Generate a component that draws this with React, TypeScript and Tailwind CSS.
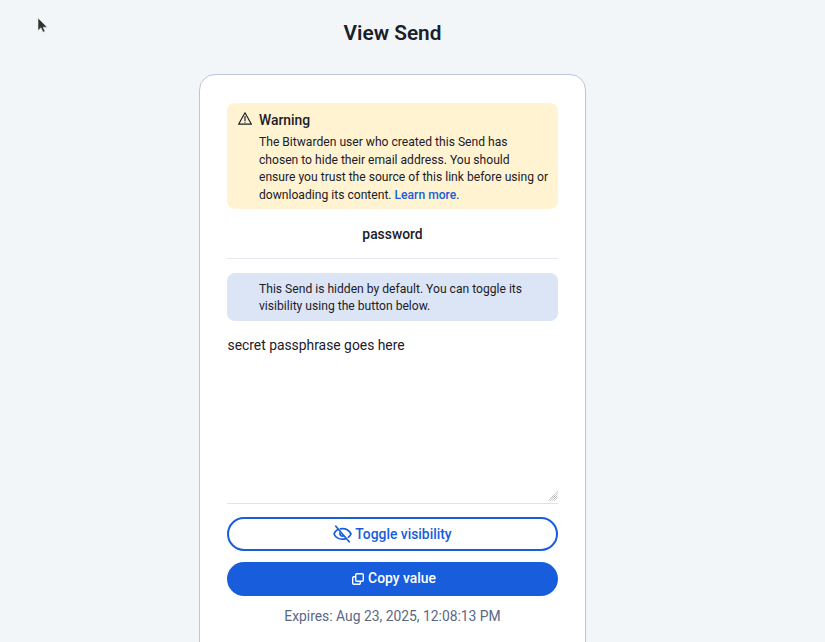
import React from "react";

function WarnIcon() {
  return (
    <svg width="14" height="13" viewBox="0 0 14 13" fill="none" stroke="#1b2029" strokeWidth="1.2" strokeLinejoin="round" strokeLinecap="round" className="shrink-0">
      <path d="M7 0.8 L13.4 12.2 H0.6 Z" />
      <path d="M7 4.6 V8.4" />
      <path d="M7 10 V10.2" />
    </svg>
  );
}

function EyeSlash() {
  return (
    <svg width="19" height="18" viewBox="0 0 19 18" fill="none" stroke="#175ddc" strokeWidth="1.7" strokeLinecap="round" strokeLinejoin="round" className="shrink-0">
      <path d="M4.8 4.6 C3 5.7 1.6 7.2 1 9 C2.6 12.4 5.6 14.2 9.5 14.2 C10.8 14.2 11.8 14 12.8 13.6" />
      <path d="M7.4 3.9 C8.1 3.8 8.8 3.7 9.5 3.7 C13.4 3.7 16.4 5.8 18 9 C17.4 10.3 16.5 11.4 15.4 12.2" />
      <path d="M6.8 8 C6.8 9.8 8.2 11.2 10 11.2" />
      <path d="M2.8 1.2 L16.2 16.8" />
    </svg>
  );
}

function CopyIcon() {
  return (
    <svg width="12" height="12" viewBox="0 0 12 12" fill="none" stroke="#ffffff" strokeWidth="1.4" strokeLinejoin="round" className="shrink-0">
      <rect x="3.7" y="0.7" width="7.6" height="7.6" rx="1.2" />
      <path d="M3.7 3.7 H1.9 A1.2 1.2 0 0 0 0.7 4.9 V10.1 A1.2 1.2 0 0 0 1.9 11.3 H7.1 A1.2 1.2 0 0 0 8.3 10.1 V8.3" />
    </svg>
  );
}

export default function App() {
  return (
    <div className="relative h-[642px] overflow-hidden bg-[#f3f6f9] font-['Roboto',sans-serif] text-[#1b2029]">
      <svg width="12" height="17" viewBox="0 0 12 17" className="absolute left-[37px] top-[17px]">
        <path d="M1 1 V13.5 L4 10.8 L6 15.2 L8 14.3 L6.2 10.2 H10.2 Z" fill="#33322f" stroke="#e4e5e5" strokeWidth="0.6" />
      </svg>
      <div className="w-[785px]">
        <h1 className="pt-[19px] text-center text-[20.8px] font-semibold leading-[28px] text-[#1b2029]">View Send</h1>
        <div className="mx-auto mt-[27px] h-[640px] w-[387px] rounded-2xl border border-[#bdc6d9] bg-white px-[27px] pt-[28px]">
          <div className="flex gap-[7px] rounded-lg bg-[#fff3d1] pt-[6px] pb-[5px] pl-[11px] pr-[9.5px]">
            <div className="pt-[3px]"><WarnIcon /></div>
            <div className="min-w-0">
              <div className="text-[13.86px] font-medium leading-[22px]">Warning</div>
              <p className="mt-[3px] text-[12.12px] leading-[17.5px] text-[#1b2029]">
                The Bitwarden user who created this Send has chosen to hide their email address. You should ensure you trust the source of this link before using or downloading its content. <span className="font-medium text-[#175ddc]">Learn more</span>.
              </p>
            </div>
          </div>
          <div className="border-b border-[#e6e9ef] pt-[15px] pb-[13px] text-center text-[13.86px] font-medium leading-[21px]">password</div>
          <div className="mt-[14px] rounded-lg bg-[#dbe5f6] pt-[7.5px] pb-[5.5px] pl-[32px] pr-[8px] text-[12.12px] leading-[17.5px]">
            This Send is hidden by default. You can toggle its visibility using the button below.
          </div>
          <div className="relative mt-[14px]">
            <textarea
              readOnly
              defaultValue="secret passphrase goes here"
              className="block h-[169px] w-full resize-none border-b border-[#dfe3ea] bg-white pl-[0.5px] text-[13.86px] leading-[21px] text-[#1b2029] outline-none"
            />
            <svg width="10" height="10" viewBox="0 0 10 10" className="absolute bottom-[3px] right-0" stroke="#808080" strokeWidth="0.7" strokeDasharray="1.2 0.5">
              <path d="M0.5 9.5 L9.5 0.5" />
              <path d="M2.5 9.5 L9.5 2.5" />
              <path d="M4.5 9.5 L9.5 4.5" />
              <path d="M6.5 9.5 L9.5 6.5" />
            </svg>
          </div>
          <button className="mt-[13px] flex h-[34px] w-full items-center justify-center gap-[3px] rounded-full border-2 border-[#175ddc] bg-white text-[13.86px] font-medium text-[#175ddc]">
            <EyeSlash />
            Toggle visibility
          </button>
          <button className="mt-[11px] flex h-[33.5px] w-full items-center justify-center gap-[4px] rounded-full bg-[#175ddc] pl-[3px] text-[13.86px] font-medium text-white">
            <CopyIcon />
            Copy value
          </button>
          <div className="mt-[11.5px] text-center text-[13.86px] leading-[18px] text-[#5a6785]">Expires: Aug 23, 2025, 12:08:13 PM</div>
        </div>
      </div>
    </div>
  );
}
